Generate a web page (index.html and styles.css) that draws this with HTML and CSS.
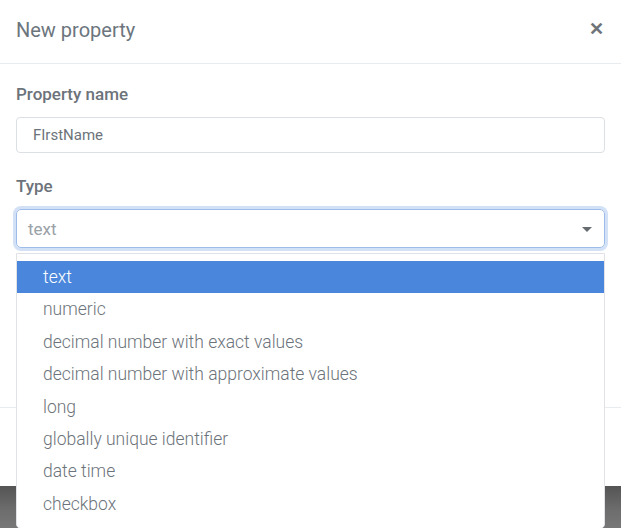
FILE: index.html
```html
<!DOCTYPE html>
<html>
<head>
<meta charset="utf-8">
<link rel="stylesheet" href="styles.css">
</head>
<body>
<div class="screen">
  <div class="modal">
    <div class="modal-header">
      <span class="modal-title">New property</span>
      <span class="close">&#x2715;</span>
    </div>
    <div class="modal-body">
      <div class="field">
        <label class="label">Property name</label>
        <div class="input">FIrstName</div>
      </div>
      <div class="field field-type">
        <label class="label">Type</label>
        <div class="select">
          <span class="select-value">text</span>
          <span class="caret"></span>
        </div>
        <ul class="dropdown">
          <li class="option active">text</li>
          <li class="option">numeric</li>
          <li class="option">decimal number with exact values</li>
          <li class="option">decimal number with approximate values</li>
          <li class="option">long</li>
          <li class="option">globally unique identifier</li>
          <li class="option">date time</li>
          <li class="option">checkbox</li>
        </ul>
      </div>
    </div>
    <div class="modal-footer"></div>
  </div>
  <div class="backdrop"></div>
</div>
</body>
</html>
```
FILE: styles.css
```css
* { box-sizing: border-box; }
html, body { margin: 0; padding: 0; }
body {
  font-family: Roboto, "Liberation Sans", sans-serif;
  background: #fff;
  width: 621px;
  height: 528px;
  overflow: hidden;
}
.screen { display: flex; flex-direction: column; height: 528px; }
.modal {
  height: 486px;
  background: #fff;
  display: flex;
  flex-direction: column;
}
.modal-header {
  height: 64px;
  border-bottom: 1px solid #e9ecef;
  display: flex;
  align-items: center;
  justify-content: space-between;
  padding: 0 17px 4px 16px;
}
.modal-title {
  font-size: 20px;
  color: #6c757d;
}
.close {
  font-size: 18px;
  font-weight: 700;
  color: #6f7479;
  margin-top: -2px;
}
.modal-body {
  padding: 19px 16px 0 16px;
  height: 344px;
  border-bottom: 1px solid #e9ecef;
}
.field { position: relative; }
.label {
  display: block;
  font-size: 17px;
  font-weight: 500;
  color: #6c737a;
  height: 22px;
  line-height: 22px;
}
.input {
  margin-top: 12px;
  height: 36px;
  border: 1px solid #dcdfe3;
  border-radius: 4px;
  padding: 0 16px;
  font-size: 15px;
  color: #6c737a;
  line-height: 34px;
}
.field-type { margin-top: 22px; }
.select {
  margin-top: 12px;
  height: 39px;
  border: 1px solid #9ebce9;
  border-radius: 5px;
  box-shadow: 0 0 0 3px #d3e1f7;
  padding: 0 12px 0 11px;
  display: flex;
  align-items: center;
  justify-content: space-between;
}
.select-value {
  font-size: 17px;
  color: #9aa1a7;
}
.caret {
  width: 0; height: 0;
  border-left: 5px solid transparent;
  border-right: 5px solid transparent;
  border-top: 5px solid #666b70;
  margin-top: 1px;
}
.dropdown {
  position: absolute;
  left: 0;
  right: 0;
  top: 78px;
  margin: 0;
  padding: 7px 0 8px 0;
  list-style: none;
  background: #fff;
  border: 1px solid #e0e2e5;
  border-radius: 0 0 5px 5px;
  height: 276px;
}
.option {
  height: 32.4px;
  line-height: 32px;
  padding-left: 26px;
  font-size: 17.5px;
  font-weight: 300;
  color: #6c737a;
}
.option.active {
  background: #4a86dc;
  color: #fff;
}
.modal-footer { flex: 1; }
.backdrop {
  flex: 1;
  background: linear-gradient(#555 0%, #6e6e6e 60%, #777 100%);
}
```
